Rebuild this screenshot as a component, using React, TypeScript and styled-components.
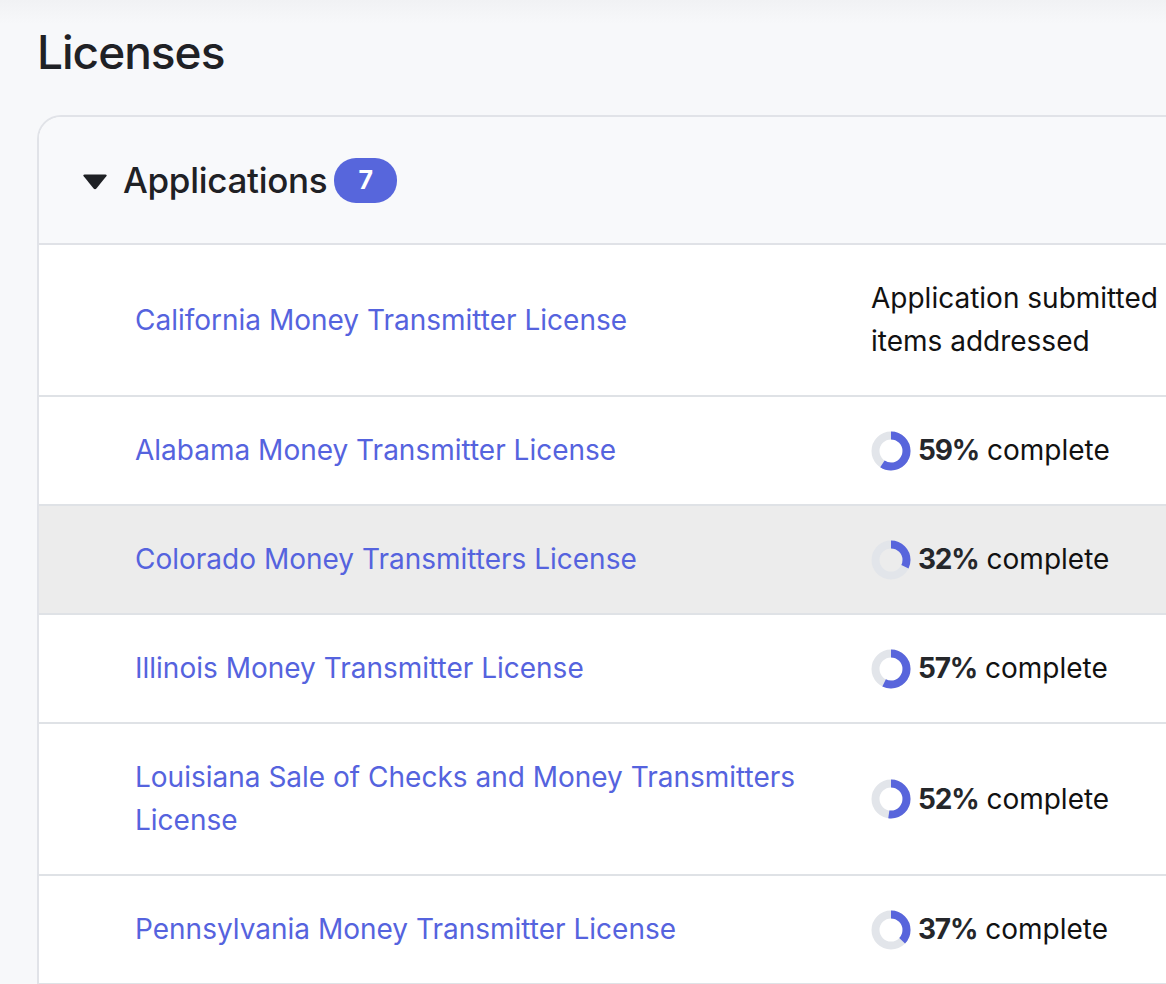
import React from "react";
import styled, { createGlobalStyle } from "styled-components";

const Global = createGlobalStyle`
  html, body { margin: 0; padding: 0; }
  body {
    background: #f7f8fa;
    font-family: Inter, "Noto Sans", sans-serif;
    overflow: hidden;
  }
`;

const Page = styled.div`
  min-height: 984px;
  width: 1166px;
  background: linear-gradient(to bottom, #f1f2f4 0px, #f7f8fa 24px, #f7f8fa 100%);
  padding: 0 0 0 37px;
  box-sizing: border-box;
  overflow: hidden;
`;

const Title = styled.h1`
  margin: 0;
  padding-top: 24px;
  height: 115px;
  box-sizing: border-box;
  font-size: 46px;
  font-weight: 500;
  line-height: 56px;
  letter-spacing: -1px;
  color: #1f2125;
`;

const Card = styled.section`
  width: 1180px;
  border: 2px solid #e1e3e8;
  border-right: none;
  border-bottom: none;
  border-top-left-radius: 24px;
  overflow: hidden;
  background: #ffffff;
`;

const Header = styled.div`
  display: flex;
  align-items: center;
  height: 126px;
  padding-left: 43px;
  background: #f8f9fb;
  border-bottom: 2px solid #e0e2e7;
`;

const Caret = styled.svg`
  width: 26px;
  height: 17px;
  margin-right: 15px;
  margin-top: 2px;
`;

const HeaderTitle = styled.h2`
  margin: 0;
  font-size: 35px;
  font-weight: 500;
  color: #1f2125;
  letter-spacing: -0.3px;
`;

const Badge = styled.span`
  display: inline-flex;
  align-items: center;
  justify-content: center;
  margin-left: 7px;
  width: 63px;
  height: 45px;
  border-radius: 22px;
  background: #5766dc;
  color: #ffffff;
  font-size: 25px;
  font-weight: 700;
`;

const Row = styled.div<{ $hover?: boolean }>`
  display: grid;
  grid-template-columns: 832px 1fr;
  align-items: center;
  padding: 32px 0;
  background: ${(p) => (p.$hover ? "#ececec" : "#ffffff")};
  border-bottom: 2px solid #dfe2e6;
`;

const NameCell = styled.div`
  padding-left: 96px;
  padding-right: 36px;
`;

const LinkText = styled.a`
  font-size: 28px;
  line-height: 43px;
  color: #5563de;
  text-decoration: none;
  cursor: pointer;
`;

const StatusCell = styled.div`
  display: flex;
  align-items: center;
  font-size: 28px;
  line-height: 43px;
  color: #111111;
  white-space: nowrap;
`;

const StatusText = styled.div`
  font-size: 28px;
  line-height: 43px;
  color: #111111;
  white-space: normal;
  width: 300px;
`;

const Donut = styled.svg`
  width: 40px;
  height: 40px;
  margin-right: 7px;
  flex: none;
`;

const Pct = styled.b`
  font-weight: 700;
  color: #25272b;
  letter-spacing: -1.2px;
  margin-right: 8px;
`;

function Progress({ value }: { value: number }) {
  const r = 15.5;
  const c = 2 * Math.PI * r;
  return (
    <Donut viewBox="0 0 40 40">
      <circle cx="20" cy="20" r={r} fill="none" stroke="#e2e5ea" strokeWidth="8" />
      <circle
        cx="20"
        cy="20"
        r={r}
        fill="none"
        stroke="#5865dc"
        strokeWidth="8"
        strokeDasharray={`${(c * value) / 100} ${c}`}
        transform="rotate(-90 20 20)"
      />
    </Donut>
  );
}

const rows: { name: string; pct?: number; status?: string; hover?: boolean }[] = [
  { name: "California Money Transmitter License", status: "Application submitted items addressed" },
  { name: "Alabama Money Transmitter License", pct: 59 },
  { name: "Colorado Money Transmitters License", pct: 32, hover: true },
  { name: "Illinois Money Transmitter License", pct: 57 },
  { name: "Louisiana Sale of Checks and Money Transmitters License", pct: 52 },
  { name: "Pennsylvania Money Transmitter License", pct: 37 },
  { name: "Texas Money Transmitter License", pct: 44 },
];

export default function App() {
  return (
    <Page>
      <Global />
      <Title>Licenses</Title>
      <Card>
        <Header>
          <Caret viewBox="0 0 26 17">
            <path d="M2.5 1.5 H23.5 Q25.5 1.5 24.3 3.2 L14.4 15.6 Q13 17 11.6 15.6 L1.7 3.2 Q0.5 1.5 2.5 1.5 Z" fill="#1f2125" />
          </Caret>
          <HeaderTitle>Applications</HeaderTitle>
          <Badge>7</Badge>
        </Header>
        {rows.map((r) => (
          <Row key={r.name} $hover={r.hover}>
            <NameCell>
              <LinkText>{r.name}</LinkText>
            </NameCell>
            <StatusCell>
              {r.status ? (
                <StatusText>{r.status}</StatusText>
              ) : (
                <>
                  <Progress value={r.pct ?? 0} />
                  <Pct>{r.pct}%</Pct>complete
                </>
              )}
            </StatusCell>
          </Row>
        ))}
      </Card>
    </Page>
  );
}
